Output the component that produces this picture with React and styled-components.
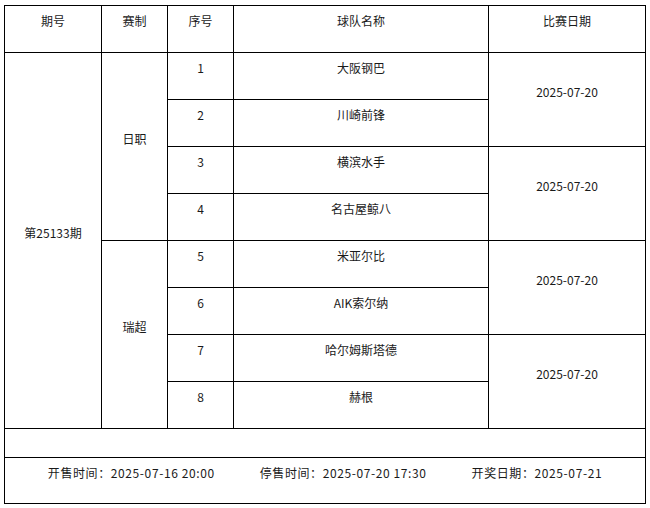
import React from 'react';
import styled, { createGlobalStyle } from 'styled-components';

const GlobalStyle = createGlobalStyle`
  body {
    margin: 0;
    background: #fff;
    font-family: "Noto Sans CJK SC", "Liberation Sans", sans-serif;
  }
`;

const Page = styled.div`
  padding: 5px 0 0 4px;
`;

const Table = styled.table`
  border-collapse: collapse;
  width: 641px;
  table-layout: fixed;
  font-size: 12px;
  color: #1a1a1a;
  border-top: 1px solid #8a8a8a;
  border-right: 1px solid #8a8a8a;
`;

const Cell = styled.td`
  border: 1px solid #000;
  text-align: center;
  vertical-align: middle;
  line-height: 19px;
  padding: ${props => props.head ? '5px 0 21px' : '5px 0 22px'};
  font-weight: normal;
`;

const EmptyCell = styled.td`
  border: 1px solid #000;
  height: 28px;
  padding: 0;
`;

const Footer = styled.div`
  display: flex;
  justify-content: center;
  gap: 45px;
  letter-spacing: 0.6px;
`;

const matches = [
  { no: 1, team: '大阪钢巴', date: '2025-07-20' },
  { no: 2, team: '川崎前锋' },
  { no: 3, team: '横滨水手', date: '2025-07-20' },
  { no: 4, team: '名古屋鲸八' },
  { no: 5, team: '米亚尔比', date: '2025-07-20' },
  { no: 6, team: 'AIK索尔纳' },
  { no: 7, team: '哈尔姆斯塔德', date: '2025-07-20' },
  { no: 8, team: '赫根' },
];

const leagues = { 1: '日职', 5: '瑞超' };

export default function App() {
  return (
    <Page>
      <GlobalStyle />
      <Table>
        <colgroup>
          <col style={{ width: '97px' }} />
          <col style={{ width: '66px' }} />
          <col style={{ width: '66px' }} />
          <col style={{ width: '255px' }} />
          <col style={{ width: '157px' }} />
        </colgroup>
        <tbody>
          <tr>
            <Cell as="th">期号</Cell>
            <Cell as="th">赛制</Cell>
            <Cell as="th">序号</Cell>
            <Cell as="th">球队名称</Cell>
            <Cell as="th">比赛日期</Cell>
          </tr>
          {matches.map((m, i) => (
            <tr key={m.no}>
              {i === 0 && <Cell rowSpan={8}>第25133期</Cell>}
              {leagues[m.no] && <Cell rowSpan={4}>{leagues[m.no]}</Cell>}
              <Cell>{m.no}</Cell>
              <Cell>{m.team}</Cell>
              {m.date && <Cell rowSpan={2}>{m.date}</Cell>}
            </tr>
          ))}
          <tr>
            <EmptyCell colSpan={5} />
          </tr>
          <tr>
            <Cell colSpan={5} head>
              <Footer>
                <span>开售时间：2025-07-16 20:00</span>
                <span>停售时间：2025-07-20 17:30</span>
                <span>开奖日期：2025-07-21</span>
              </Footer>
            </Cell>
          </tr>
        </tbody>
      </Table>
    </Page>
  );
}
